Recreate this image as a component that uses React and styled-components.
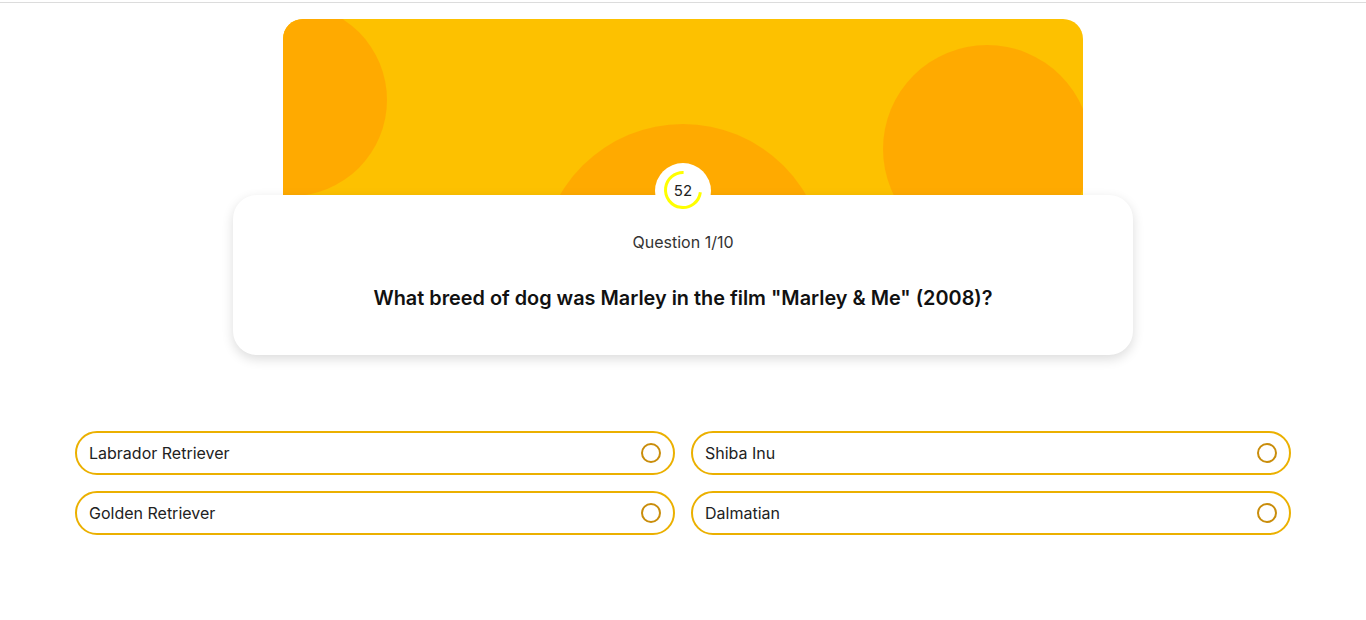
import React from 'react';
import styled, { createGlobalStyle } from 'styled-components';

const GlobalStyle = createGlobalStyle`
  * { box-sizing: border-box; }
  body {
    margin: 0;
    background: #fff;
    font-family: Inter, "Noto Sans", sans-serif;
    color: #222;
  }
`;

const TopBar = styled.div`
  height: 3px;
  border-bottom: 1px solid #dcdcdc;
`;

const Main = styled.main`
  display: flex;
  flex-direction: column;
  align-items: center;
  padding-top: 16px;
`;

const Banner = styled.div`
  position: relative;
  width: 800px;
  height: 176px;
  background: #fdc100;
  border-radius: 20px 20px 0 0;
  overflow: hidden;
`;

const Blob = styled.span`
  position: absolute;
  left: ${({ $x, $r }) => $x - $r}px;
  top: ${({ $y, $r }) => $y - $r}px;
  width: ${({ $r }) => $r * 2}px;
  height: ${({ $r }) => $r * 2}px;
  border-radius: 50%;
  background: #ffaa00;
`;

const Card = styled.section`
  position: relative;
  width: 900px;
  padding: 37px 40px 45px;
  background: #fff;
  border-radius: 24px;
  box-shadow: 0 4px 12px rgba(0, 0, 0, 0.14);
  display: flex;
  flex-direction: column;
  align-items: center;
  gap: 34px;
`;

const Timer = styled.div`
  position: absolute;
  top: -32px;
  left: 50%;
  transform: translateX(-50%);
  width: 56px;
  height: 56px;
  border-radius: 50%;
  background: #fff;
  display: flex;
  align-items: center;
  justify-content: center;
`;

const TimerValue = styled.span`
  position: absolute;
  margin-top: -2px;
  font-size: 15px;
  color: #222;
  line-height: 1;
`;

const Counter = styled.div`
  font-size: 16px;
  line-height: 20px;
  color: #333;
`;

const Question = styled.h2`
  margin: 0;
  font-size: 19.85px;
  line-height: 24px;
  font-weight: 600;
  color: #111;
  text-align: center;
`;

const Options = styled.div`
  display: grid;
  grid-template-columns: 600px 600px;
  gap: 16px;
  margin-top: 76px;
`;

const Option = styled.button`
  height: 44px;
  padding: 0 12px;
  display: flex;
  align-items: center;
  justify-content: space-between;
  border: 2px solid #ebb000;
  border-radius: 22px;
  background: #fff;
  font-family: Inter, "Noto Sans", sans-serif;
  font-size: 16px;
  color: #222;
  cursor: pointer;
  text-align: left;
`;

const Radio = styled.span`
  width: 20px;
  height: 20px;
  border-radius: 50%;
  border: 2px solid #c98d0b;
`;

const TimerRing = ({ fraction }) => {
  const r = 17.5;
  const c = 2 * Math.PI * r;
  const start = -90 + 360 * (1 - fraction);
  return (
    <svg width="42" height="42" viewBox="0 0 42 42">
      <circle
        cx="21"
        cy="20"
        r={r}
        fill="none"
        stroke="#ffff00"
        strokeWidth="3"
        strokeDasharray={`${c * fraction} ${c}`}
        transform={`rotate(${start} 21 20)`}
      />
    </svg>
  );
};

const answers = ['Labrador Retriever', 'Shiba Inu', 'Golden Retriever', 'Dalmatian'];

const App = () => {
  return (
    <>
      <GlobalStyle />
      <TopBar />
      <Main>
        <Banner>
          <Blob $x={8} $y={81} $r={96} />
          <Blob $x={400} $y={247} $r={142} />
          <Blob $x={704} $y={130} $r={104} />
        </Banner>
        <Card>
          <Timer>
            <TimerRing fraction={0.73} />
            <TimerValue>52</TimerValue>
          </Timer>
          <Counter>Question 1/10</Counter>
          <Question>What breed of dog was Marley in the film "Marley &amp; Me" (2008)?</Question>
        </Card>
        <Options>
          {answers.map((a) => (
            <Option key={a}>
              {a}
              <Radio />
            </Option>
          ))}
        </Options>
      </Main>
    </>
  );
};

export default App;
